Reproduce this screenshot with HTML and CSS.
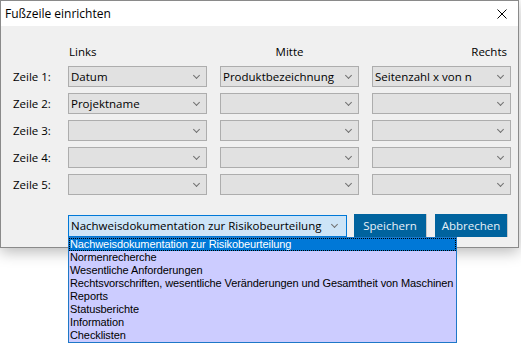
FILE: index.html
```html
<!DOCTYPE html>
<html lang="de">
<head>
    <meta charset="utf-8">
    <title>Fußzeile einrichten</title>
    <link rel="stylesheet" href="styles.css">
</head>
<body>
<div class="window">
    <div class="titlebar">
        <span class="title">Fußzeile einrichten</span>
        <svg class="close" width="10" height="10" viewBox="0 0 10 10"><path d="M0.5 0.5 L9.5 9.5 M9.5 0.5 L0.5 9.5" stroke="#000" stroke-width="1"/></svg>
    </div>
    <div class="content">
        <div class="grid">
            <span></span>
            <span class="head left">Links</span>
            <span class="head center">Mitte</span>
            <span class="head right">Rechts</span>

            <span class="label">Zeile 1:</span>
            <div class="combo"><span>Datum</span><i class="chev"></i></div>
            <div class="combo"><span>Produktbezeichnung</span><i class="chev"></i></div>
            <div class="combo"><span>Seitenzahl x von n</span><i class="chev"></i></div>

            <span class="label">Zeile 2:</span>
            <div class="combo"><span>Projektname</span><i class="chev"></i></div>
            <div class="combo"><span></span><i class="chev"></i></div>
            <div class="combo"><span></span><i class="chev"></i></div>

            <span class="label">Zeile 3:</span>
            <div class="combo"><span></span><i class="chev"></i></div>
            <div class="combo"><span></span><i class="chev"></i></div>
            <div class="combo"><span></span><i class="chev"></i></div>

            <span class="label">Zeile 4:</span>
            <div class="combo"><span></span><i class="chev"></i></div>
            <div class="combo"><span></span><i class="chev"></i></div>
            <div class="combo"><span></span><i class="chev"></i></div>

            <span class="label">Zeile 5:</span>
            <div class="combo"><span></span><i class="chev"></i></div>
            <div class="combo"><span></span><i class="chev"></i></div>
            <div class="combo"><span></span><i class="chev"></i></div>
        </div>

        <div class="actions">
            <div class="combo active"><span>Nachweisdokumentation zur Risikobeurteilung</span><i class="chev"></i></div>
            <button class="btn">Speichern</button>
            <button class="btn">Abbrechen</button>
        </div>
    </div>
</div>

<ul class="dropdown">
    <li class="selected">Nachweisdokumentation zur Risikobeurteilung</li>
    <li>Normenrecherche</li>
    <li>Wesentliche Anforderungen</li>
    <li>Rechtsvorschriften, wesentliche Veränderungen und Gesamtheit von Maschinen</li>
    <li>Reports</li>
    <li>Statusberichte</li>
    <li>Information</li>
    <li>Checklisten</li>
</ul>
</body>
</html>
```

FILE: styles.css
```css
* {
    box-sizing: border-box;
}
body {
    margin: 0;
    background: #fff;
    font-family: 'Open Sans', 'Noto Sans', sans-serif;
    font-size: 11.5px;
    color: #000;
    position: relative;
    height: 344px;
    overflow: hidden;
}
.window {
    width: 519px;
    height: 248px;
    border: 1px solid #8a8a8a;
    background: #f0f0f0;
    box-shadow: 0 4px 14px rgba(0, 0, 0, 0.28);
    display: flex;
    flex-direction: column;
}
.titlebar {
    height: 25px;
    background: #fff;
    display: flex;
    align-items: center;
    justify-content: space-between;
    padding: 0 11px 0 4px;
}
.title {
    font-size: 12px;
}
.content {
    padding: 18px 0 0 0;
}
.grid {
    display: grid;
    grid-template-columns: 54px 139px 139px 139px;
    column-gap: 13px;
    row-gap: 6px;
    align-items: center;
}
.head {
    padding-bottom: 1px;
}
.head.left {
    padding-left: 1px;
}
.head.center {
    text-align: center;
}
.head.right {
    text-align: right;
    padding-right: 4px;
}
.label {
    padding-left: 12px;
}
.combo {
    height: 21px;
    border: 1px solid #adadad;
    background: #e1e1e1;
    display: flex;
    align-items: center;
    justify-content: space-between;
    padding: 0 7px 0 2px;
}
.chev {
    width: 5px;
    height: 5px;
    border-right: 1px solid #707070;
    border-bottom: 1px solid #707070;
    transform: rotate(45deg);
    margin-top: -3px;
}
.actions {
    display: flex;
    align-items: center;
    margin: 19px 0 0 67px;
    gap: 7px;
}
.combo.active {
    width: 279px;
    height: 22px;
    border-color: #0078d7;
    background: #cce4f7;
    padding-right: 9px;
}
.btn {
    width: 73px;
    height: 23px;
    border: none;
    border-right: 1px solid #c8c8c8;
    background: #00639e;
    color: #e8f0f8;
    font: inherit;
    padding: 0;
}
.btn + .btn {
    margin-left: 1px;
}
.dropdown {
    position: absolute;
    left: 68px;
    top: 237px;
    width: 389px;
    margin: 0;
    padding: 0;
    list-style: none;
    background: #ccccff;
    border: 1px solid #1e78c8;
    font-family: 'Liberation Sans', sans-serif;
    font-size: 11px;
    letter-spacing: -0.1px;
}
.dropdown li {
    height: 13px;
    line-height: 13px;
    padding-left: 1px;
    white-space: nowrap;
}
.dropdown li.selected {
    background: #0078d7;
    color: #fff;
    outline: 1px dotted #000;
    outline-offset: -1px;
}
```
